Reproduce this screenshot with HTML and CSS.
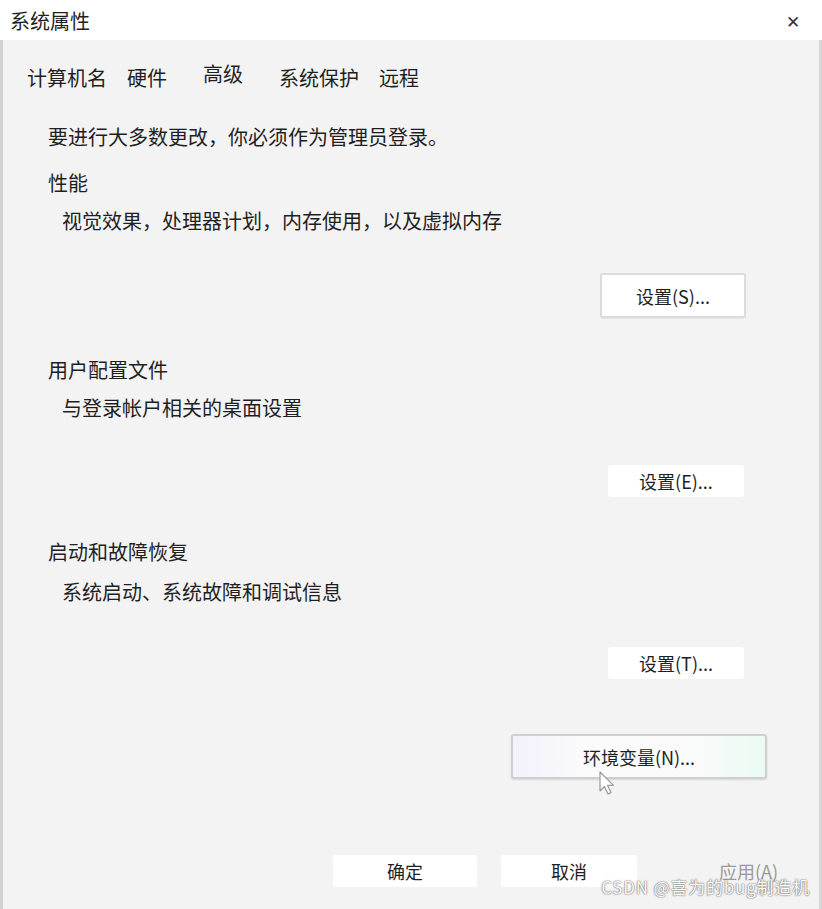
FILE: index.html
```html
<!DOCTYPE html>
<html lang="zh-CN">
<head>
    <meta charset="UTF-8">
    <title>系统属性</title>
    <link rel="stylesheet" href="styles.css">
</head>
<body>
    <div class="window">
        <div class="titlebar">
            <span class="title">系统属性</span>
            <span class="close">✕</span>
        </div>

        <div class="body">
            <div class="tabs">
                <span class="tab">计算机名</span>
                <span class="tab">硬件</span>
                <span class="tab active">高级</span>
                <span class="tab">系统保护</span>
                <span class="tab">远程</span>
            </div>

            <div class="panel">
                <p class="intro">要进行大多数更改，你必须作为管理员登录。</p>

                <div class="group">
                    <p class="group-title">性能</p>
                    <p class="group-desc">视觉效果，处理器计划，内存使用，以及虚拟内存</p>
                    <div class="row"><button class="btn btn-framed">设置(S)...</button></div>
                </div>

                <div class="group">
                    <p class="group-title">用户配置文件</p>
                    <p class="group-desc">与登录帐户相关的桌面设置</p>
                    <div class="row"><button class="btn">设置(E)...</button></div>
                </div>

                <div class="group group-startup">
                    <p class="group-title">启动和故障恢复</p>
                    <p class="group-desc">系统启动、系统故障和调试信息</p>
                    <div class="row"><button class="btn">设置(T)...</button></div>
                </div>

                <div class="row env-row">
                    <button class="btn btn-env">环境变量(N)...</button>
                    <!-- mouse pointer hovering the button -->
                    <svg class="cursor" width="18" height="26" viewBox="0 0 18 26">
                        <path d="M2 1 L2 20 L6.5 15.5 L10 23 L13 21.6 L9.6 14.4 L15.5 14.4 Z" fill="#fff" stroke="#9a9a9a" stroke-width="1.2" stroke-linejoin="round"/>
                    </svg>
                </div>
            </div>

            <div class="footer">
                <button class="btn btn-foot ok">确定</button>
                <button class="btn btn-foot cancel">取消</button>
                <button class="btn btn-foot apply" disabled>应用(A)</button>
            </div>

            <span class="watermark">CSDN @喜为的bug制造机</span>
        </div>
    </div>
</body>
</html>
```

FILE: styles.css
```css
* { box-sizing: border-box; }

html, body {
    margin: 0;
    padding: 0;
}

body {
    width: 822px;
    height: 909px;
    overflow: hidden;
    background: #f3f3f3;
    font-family: "Noto Sans CJK SC", "Microsoft YaHei", sans-serif;
    color: #1f1f1f;
}

.window {
    height: 909px;
    display: flex;
    flex-direction: column;
}

.titlebar {
    height: 40px;
    background: #fff;
    display: flex;
    align-items: center;
    justify-content: space-between;
    padding: 0 22px 0 10px;
}
.title { font-size: 20px; }
.close { font-size: 17px; color: #333; }

.body {
    position: relative;
    flex: 1;
    background: #f3f3f3;
    border-left: 3px solid #d2d2d2;
    border-right: 3px solid #d8d8d8;
}

.tabs {
    display: flex;
    margin-top: 26px;
    padding-left: 14px;
    font-size: 20px;
    line-height: 24px;
}
.tab { padding: 0 10px; }
.tab.active {
    padding: 0 26px;
    position: relative;
    top: -4px;
}

.panel {
    padding-left: 45px;
    padding-right: 52px;
}

p { margin: 0; font-size: 20px; line-height: 24px; }

.intro { margin-top: 35px; }

.group-title { margin-top: 22px; }
.group + .group .group-title { margin-top: 40px; }
.group + .group-startup .group-title { margin-top: 43px; }

.group-desc {
    margin-top: 14px;
    padding-left: 14px;
}
.group-startup .group-desc { margin-top: 16px; }

.row {
    display: flex;
    justify-content: flex-end;
}

.btn {
    font-family: inherit;
    font-size: 18px;
    color: #1f1f1f;
    background: #fff;
    border: none;
    border-radius: 3px;
    width: 136px;
    height: 32px;
    margin-top: 45px;
    margin-right: 23px;
    padding: 0;
}

.btn-framed {
    width: 146px;
    height: 45px;
    margin-top: 40px;
    margin-right: 21px;
    border: 2px solid #dcdcdc;
    box-shadow: 0 1px 1px rgba(0,0,0,0.06);
}

.group-startup .btn { margin-top: 43px; }

.env-row { position: relative; }
.btn-env {
    width: 256px;
    height: 45px;
    margin-top: 55px;
    margin-right: 0;
    background: linear-gradient(90deg, #f3f1fb 0%, #fbfbfb 30%, #fbfbfb 70%, #eafaf3 100%);
    border: 2px solid #cfcfcf;
    border-radius: 3px;
    box-shadow: 0 1px 2px rgba(0,0,0,0.12);
}

.cursor {
    position: absolute;
    left: 550px;
    top: 92px;
}

.footer {
    display: flex;
    margin-top: 76px;
    padding-left: 330px;
    gap: 24px;
}
.btn-foot {
    margin: 0;
    width: 144px;
    height: 32px;
}
.cancel { width: 136px; }
.apply {
    width: 140px;
    background: transparent;
    color: #9a9a9a;
    padding-left: 35px;
}

.watermark {
    position: absolute;
    right: 9px;
    bottom: 10px;
    font-size: 17px;
    color: #fff;
    letter-spacing: 0.8px;
    text-shadow: 0 0 1px #555, 0 0 2px #777;
}
```
